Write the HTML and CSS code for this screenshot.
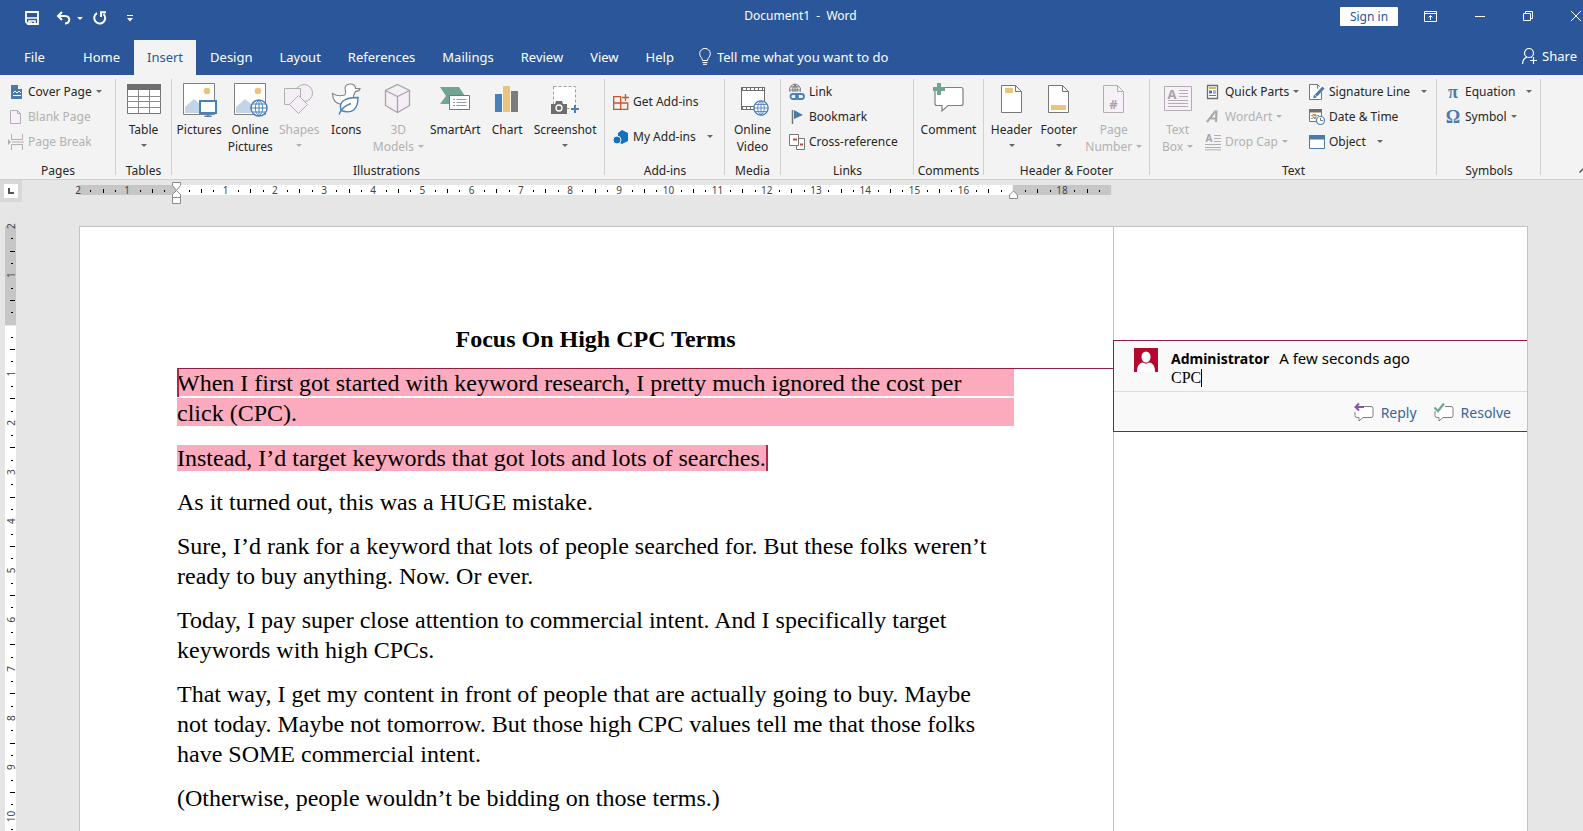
FILE: index.html
```html
<!DOCTYPE html>
<html lang="en">
<head>
    <meta charset="UTF-8">
    <meta name="viewport" content="width=device-width, initial-scale=1.0">
    <title>Document1 - Word</title>
    <link rel="stylesheet" href="styles.css">
</head>
<body>
    <svg class="defs" width="0" height="0" aria-hidden="true">
        <symbol id="globe" viewBox="0 0 18 18">
            <circle cx="9" cy="9" r="8" fill="#fff" stroke="#4a80b8" stroke-width="1.5"/>
            <path d="M1 9h16M9 1v16M2.5 5h13M2.5 13h13M9 1c-5 4-5 12 0 16M9 1c5 4 5 12 0 16" fill="none" stroke="#4a80b8"/>
        </symbol>
    </svg>

    <header class="titlebar">
        <div class="quick">
            <button aria-label="Save"><svg width="14" height="14" viewBox="0 0 14 14"><path d="M1 1h12v12H3L1 11z" fill="none" stroke="#fff" stroke-width="1.8"/><path d="M1 7h12M4 13v-3h6v3M6 11v2" fill="none" stroke="#fff" stroke-width="1.6"/></svg></button>
            <button class="undo" aria-label="Undo"><svg width="15" height="14" viewBox="0 0 15 14"><path d="M6 1L2 5l4 4M2 5h7c3 0 5 2 4 5-.5 1.500-2 2.500-4 2.500" fill="none" stroke="#fff" stroke-width="2"/></svg><i class="caret"></i></button>
            <button aria-label="Repeat"><svg width="14" height="14" viewBox="0 0 14 14"><path d="M4 2.200A5.500 5.500 0 1 0 10.500 3M8 6V1.200h5" fill="none" stroke="#fff" stroke-width="2"/></svg></button>
            <button class="more" aria-label="Customize Quick Access Toolbar"><svg width="6" height="7" viewBox="0 0 6 7"><path d="M0 .5h6" stroke="#fff"/><path d="M0 3h6L3 6.500z" fill="#fff"/></svg></button>
        </div>
        <div class="doc-name">Document1&nbsp; -&nbsp; Word</div>
        <div class="window-tools">
            <button class="sign-in">Sign in</button>
            <button aria-label="Ribbon Display Options"><svg width="13" height="11" viewBox="0 0 13 11"><path d="M.5.5h12v10H.5zM.5 2.500h12M6.500 9V4.500M4.500 6.500l2-2 2 2" fill="none" stroke="#fff"/></svg></button>
            <button aria-label="Minimize"><svg width="10" height="10" viewBox="0 0 10 10"><path d="M0 5.500h10" stroke="#fff"/></svg></button>
            <button aria-label="Restore Down"><svg width="10" height="10" viewBox="0 0 10 10"><path d="M.5 2.500h7v7h-7zM2.500 2.500v-2h7v7h-2" fill="none" stroke="#fff"/></svg></button>
            <button aria-label="Close"><svg width="10" height="10" viewBox="0 0 10 10"><path d="M0 0l10 10M10 0L0 10" stroke="#fff"/></svg></button>
        </div>
    </header>

    <nav class="tabs">
        <button class="tab file">File</button>
        <button class="tab">Home</button>
        <button class="tab active">Insert</button>
        <button class="tab">Design</button>
        <button class="tab">Layout</button>
        <button class="tab">References</button>
        <button class="tab">Mailings</button>
        <button class="tab">Review</button>
        <button class="tab">View</button>
        <button class="tab">Help</button>
        <label class="tell-me">
            <svg width="12" height="17" viewBox="0 0 12 17"><path d="M3.500 12.500C3.500 10 .7 9 .7 5.700a5.300 5.300 0 0 1 10.600 0c0 3.300-2.800 4.300-2.800 6.800zM3.500 14.500h5M4 16.300h4" fill="none" stroke="#fff"/></svg>
            <input type="text" placeholder="Tell me what you want to do" aria-label="Tell me what you want to do">
        </label>
        <button class="share"><svg width="15" height="16" viewBox="0 0 15 16"><circle cx="7" cy="5" r="4.500" fill="none" stroke="#fff" stroke-width="1.200"/><path d="M.6 16c0-4 2-6 4.400-7M9 9l1 .5M8 12.500h7M11.500 9v7" fill="none" stroke="#fff" stroke-width="1.200"/></svg>Share</button>
    </nav>

    <section class="ribbon">
        <div class="group pages">
            <div class="rows">
                <button class="small"><svg width="16" height="16" viewBox="0 0 16 16"><path d="M3 1h7l4 4v10H3z" fill="#4a7ba8"/><path d="M10 1l4 4h-4z" fill="#fff"/><path d="M5 9l2-2 2 2 2-2 2 2M5 11.500h8" fill="none" stroke="#fff"/></svg>Cover Page<i class="caret"></i></button>
                <button class="small" disabled><svg width="16" height="16" viewBox="0 0 16 16"><path d="M2.500 1.500h7l3 3v10h-10zM9.500 1.500v3h3" fill="#f6f0f7" stroke="#b4adb6"/></svg>Blank Page</button>
                <button class="small" disabled><svg width="16" height="16" viewBox="0 0 16 16"><path d="M3.500 0v5.500h11V0M3.500 16v-5.500h11V16M4 8h12" fill="none" stroke="#b4adb6"/><path d="M0 5l3 3-3 3z" fill="#b4adb6"/></svg>Page Break</button>
            </div>
            <h2>Pages</h2>
        </div>

        <div class="group tables">
            <div class="bigs">
                <button class="big"><svg width="36" height="34" viewBox="0 0 36 34"><path d="M1.500 2v28.500h33V2" fill="#fff" stroke="#777"/><path d="M1 1h34v6H1z" fill="#6e6e6e"/><path d="M12.500 7v23M23.500 7v23M1 13.500h34M1 18.500h34M1 24.500h34" stroke="#8a8a8a"/></svg><span>Table</span><i class="caret"></i></button>
            </div>
            <h2>Tables</h2>
        </div>

        <div class="group illustrations">
            <div class="bigs">
                <button class="big"><svg width="36" height="34" viewBox="0 0 36 34"><path d="M2.500.5h31v31h-31z" fill="#fff" stroke="#808080"/><path d="M4 30V24l9-8 6 5v9z" fill="#c3d4e6"/><circle cx="26" cy="8" r="3.300" fill="#e9c47e"/><path d="M19 18h16v12H19z" fill="#fff" stroke="#4a80b8" stroke-width="2"/><path d="M27 30v3M23.500 33.300h7" stroke="#4a80b8" stroke-width="1.500"/></svg><span>Pictures</span></button>
                <button class="big"><svg width="36" height="34" viewBox="0 0 36 34"><path d="M2.500.5h31v31h-31z" fill="#fff" stroke="#808080"/><path d="M4 30V24l9-8 6 5v9z" fill="#c3d4e6"/><circle cx="26" cy="8" r="3.300" fill="#e9c47e"/><use href="#globe" x="18" y="16" width="18" height="18"/></svg><span>Online<br>Pictures</span></button>
                <button class="big" disabled><svg width="36" height="34" viewBox="0 0 36 34"><g fill="#f4eff5" stroke="#b4adb6"><circle cx="23" cy="10" r="8.500"/><path d="M3.500 5.500h16v16h-16z"/><path d="M17.500 12.500l9 9-9 9-9-9z"/></g></svg><span>Shapes</span><i class="caret"></i></button>
                <button class="big"><svg width="36" height="34" viewBox="0 0 36 34"><path d="M17.500 8c-1.500-4 .5-7 4.500-7 3.500 0 5.500 2 5.500 4.500H32c-.5 2-2 2.800-4.500 2.800-.5 2-2 3-2 4.700 2 8-6 9-11 8.500C8 21 4.500 17 4.500 10.500c4 2.500 9 2.500 12 1.500 1-.8 1.500-2.500 1-4z" fill="#fff" stroke="#858585" stroke-width="1.200"/><path d="M13 27.500C10.500 19 16 14.500 30 14.500c0 12-6 17-17 13zM11 31.500c2-6 6-9 12-11" fill="#fff" stroke="#4a80b8" stroke-width="1.400"/></svg><span>Icons</span></button>
                <button class="big" disabled><svg width="36" height="34" viewBox="0 0 36 34"><path d="M17.500 1.500l12 6v15l-12 7-12-7v-15z" fill="#f4eff5" stroke="#a9a2ab" stroke-width="1.300"/><path d="M5.500 7.500l12 6 12-6M17.500 13.500v16" fill="none" stroke="#a9a2ab" stroke-width="1.300"/></svg><span>3D</span><span class="line">Models<i class="caret"></i></span></button>
                <button class="big"><svg width="36" height="34" viewBox="0 0 36 34"><path d="M3 4h19l6 9-6 8H3l6-8z" fill="#6fa592"/><path d="M12.500 12.500h20v14h-20z" fill="#fff" stroke="#777"/><path d="M16 16.500h2M16 19.500h2M16 22.500h2M19.500 16.500h10M19.500 19.500h10M19.500 22.500h10" stroke="#999"/></svg><span>SmartArt</span></button>
                <button class="big"><svg width="36" height="34" viewBox="0 0 36 34"><path d="M6 11h7v18H6z" fill="#4a80b8"/><path d="M14 3h7v26h-7z" fill="#e9c47e"/><path d="M22 8h7v21h-7z" fill="#7b7b7b"/></svg><span>Chart</span></button>
                <button class="big"><svg width="36" height="34" viewBox="0 0 36 34"><path d="M6.500 3.500h22v22h-22z" fill="#fff" stroke="#a0a0a0" stroke-dasharray="3 2"/><path d="M4 21h4l1-3h6l1 3h4v10H4z" fill="#6e6e6e"/><circle cx="12" cy="25" r="3" fill="none" stroke="#fff" stroke-width="1.300"/><path d="M24 26h8M28 22v8" stroke="#4a80b8" stroke-width="2"/></svg><span>Screenshot</span><i class="caret"></i></button>
            </div>
            <h2>Illustrations</h2>
        </div>

        <div class="group addins">
            <div class="rows">
                <button class="small"><svg width="16" height="16" viewBox="0 0 16 16"><path d="M.7 2.700h7v12.600h-7zM.7 9h14v6.300H7.700M12.500 0v7M9 3.500h7" fill="none" stroke="#c8532d" stroke-width="1.300"/></svg>Get Add-ins</button>
                <button class="small"><svg width="16" height="16" viewBox="0 0 16 16"><path d="M9 1l6 3v8l-6 3-4-2V4z" fill="#0f72c5"/><circle cx="4" cy="11" r="4" fill="#0f72c5" stroke="#f3f3f3"/></svg>My Add-ins<i class="caret far"></i></button>
            </div>
            <h2>Add-ins</h2>
        </div>

        <div class="group media">
            <div class="bigs">
                <button class="big"><svg width="36" height="34" viewBox="0 0 36 34"><path d="M6.500 4.500h23v22h-23z" fill="#fff" stroke="#6e6e6e"/><path d="M6 6h24M6 25h24" stroke="#6e6e6e" stroke-width="4"/><path d="M8 6h21M8 25h21" stroke="#fff" stroke-width="2" stroke-dasharray="3 1"/><use href="#globe" x="18" y="17" width="16" height="16"/></svg><span>Online<br>Video</span></button>
            </div>
            <h2>Media</h2>
        </div>

        <div class="group links">
            <div class="rows">
                <button class="small"><svg width="16" height="16" viewBox="0 0 16 16"><path d="M1 8a5.500 5.500 0 1 1 10 0M.5 6h11M2 2.800h8M6 .5V8M6 .5C3.500 3 3.500 6 4 8M6 .5C8.500 3 8.500 6 8 8" fill="none" stroke="#777"/><rect x="1.500" y="10" width="7.500" height="5" rx="2.500" fill="none" stroke="#4a80b8" stroke-width="1.800"/><rect x="7" y="10" width="8" height="5" rx="2.500" fill="none" stroke="#4a80b8" stroke-width="1.800"/></svg>Link</button>
                <button class="small"><svg width="16" height="16" viewBox="0 0 16 16"><path d="M3.500 1v14" stroke="#777" stroke-width="1.500"/><path d="M5 1l9 5-9 4z" fill="#4a7ba8"/></svg>Bookmark</button>
                <button class="small"><svg width="16" height="16" viewBox="0 0 16 16"><path d="M7.500 4.500h8v11h-8z" fill="#fff" stroke="#777"/><path d="M.5.500h9v11h-9z" fill="#fff" stroke="#777"/><path d="M4 5.500h4M11 10.500h3" stroke="#b94a3c" stroke-width="2"/></svg>Cross-reference</button>
            </div>
            <h2>Links</h2>
        </div>

        <div class="group comments">
            <div class="bigs">
                <button class="big"><svg width="36" height="34" viewBox="0 0 36 34"><path d="M6 4.500h24q2 0 2 2v14q0 2-2 2H17l-6 5.500v-5.500H6q-2 0-2-2v-14q0-2 2-2z" fill="#fff" stroke="#808080" stroke-width="1.200"/><path d="M2 6h12M8 0v12" stroke="#6fa592" stroke-width="4"/></svg><span>Comment</span></button>
            </div>
            <h2>Comments</h2>
        </div>

        <div class="group header-footer">
            <div class="bigs">
                <button class="big"><svg width="36" height="34" viewBox="0 0 36 34"><path d="M7.500 2.500h14l6 6v21h-20zM21.500 2.500v6h6" fill="#fff" stroke="#777"/><path d="M11 5h8v5h-8z" fill="#e9c47e"/></svg><span>Header</span><i class="caret"></i></button>
                <button class="big"><svg width="36" height="34" viewBox="0 0 36 34"><path d="M7.500 2.500h14l6 6v21h-20zM21.500 2.500v6h6" fill="#fff" stroke="#777"/><path d="M10 22h15v5H10z" fill="#e9c47e"/></svg><span>Footer</span><i class="caret"></i></button>
                <button class="big" disabled><svg width="36" height="34" viewBox="0 0 36 34"><path d="M7.500 2.500h14l6 6v21h-20zM21.500 2.500v6h6" fill="#f6f0f7" stroke="#b4adb6"/><text x="17.500" y="26" class="icon-hash">#</text></svg><span>Page</span><span class="line">Number<i class="caret"></i></span></button>
            </div>
            <h2>Header &amp; Footer</h2>
        </div>

        <div class="group text">
            <div class="bigs">
                <button class="big" disabled><svg width="36" height="34" viewBox="0 0 36 34"><path d="M4.500 3.500h27v24h-27z" fill="#f6f0f7" stroke="#b4adb6"/><text x="12" y="16" class="icon-letter">A</text><path d="M19 7.500h9M19 10.500h9M19 13.500h9M8 17.500h20M8 20.500h20M8 23.500h20" stroke="#b4adb6"/></svg><span>Text</span><span class="line">Box<i class="caret"></i></span></button>
            </div>
            <div class="rows">
                <button class="small"><svg width="16" height="16" viewBox="0 0 16 16"><path d="M2.500 1.500h10v13h-10z" fill="#fff" stroke="#6e6e6e" stroke-width="1.300"/><path d="M4 4h7" stroke="#e0b261" stroke-width="2"/><path d="M4 6.500h3v3H4z" fill="#4a7ba8"/><path d="M8 7h3M8 9h3M4 11.500h7" stroke="#4a7ba8" stroke-width="1.200"/></svg>Quick Parts<i class="caret"></i></button>
                <button class="small" disabled><svg width="16" height="16" viewBox="0 0 16 16"><path d="M2 13L10 2.500h1.500l-.5 10.500M6 9.500h6" fill="none" stroke="#aaa" stroke-width="2.200"/></svg>WordArt<i class="caret"></i></button>
                <button class="small" disabled><svg width="16" height="16" viewBox="0 0 16 16"><text x="4" y="8" class="icon-letter small-letter">A</text><path d="M9 1.500h7M9 4.500h7M9 7.500h7M0 10.500h16M0 13.500h16M0 15.800h16" stroke="#b4adb6"/></svg>Drop Cap<i class="caret"></i></button>
            </div>
            <div class="rows">
                <button class="small"><svg width="16" height="16" viewBox="0 0 16 16"><path d="M.5.500h8l4 4v11H.5zM8.500.5v4h4" fill="#fff" stroke="#777"/><path d="M5 14l2-4 8-8" fill="none" stroke="#fff" stroke-width="5"/><path d="M14.500 3.500L7 11.500" stroke="#4a7ba8" stroke-width="3"/><path d="M4 14.500l1.200-4 2.800 2.800z" fill="#4a7ba8"/></svg>Signature Line<i class="caret far"></i></button>
                <button class="small"><svg width="16" height="16" viewBox="0 0 16 16"><path d="M.5.500h12v12H.5z" fill="#fff" stroke="#777"/><path d="M0 0h13v3.500H0z" fill="#6e6e6e"/><path d="M2 6.500h9M2 9.500h5" stroke="#999" stroke-dasharray="2 1"/><path d="M4 5.500h3v3H4z" fill="none" stroke="#d08a3c"/><circle cx="11.500" cy="11.500" r="4" fill="#fff" stroke="#4a80b8" stroke-width="1.200"/><path d="M11.500 9v2.500H14" fill="none" stroke="#777"/></svg>Date &amp; Time</button>
                <button class="small"><svg width="16" height="16" viewBox="0 0 16 16"><path d="M.5 2.500h15v12H.5z" fill="#fff" stroke="#4a7ba8"/><path d="M0 1h16v4.500H0z" fill="#4a7ba8"/></svg>Object<i class="caret far"></i></button>
            </div>
            <h2>Text</h2>
        </div>

        <div class="group symbols">
            <div class="rows">
                <button class="small"><b class="glyph">π</b>Equation<i class="caret far"></i></button>
                <button class="small"><b class="glyph">Ω</b>Symbol<i class="caret"></i></button>
            </div>
            <h2>Symbols</h2>
        </div>
        <button class="collapse" aria-label="Collapse the Ribbon"><svg width="8" height="5" viewBox="0 0 8 5"><path d="M.5 4.500L4 1l3.500 3.500" fill="none" stroke="#555" stroke-width="1.500"/></svg></button>
    </section>

    <div class="ruler-bar">
        <button class="tab-stop" aria-label="Left Tab"><svg width="6" height="6" viewBox="0 0 6 6"><path d="M1 0v5h5" fill="none" stroke="#555" stroke-width="2"/></svg></button>
        <svg id="ruler" class="ruler" width="1060" height="24" viewBox="-20 0 1060 24"></svg>
    </div>

    <main class="workspace">
        <svg id="side-ruler" class="side-ruler" width="11" height="1400" viewBox="0 0 11 1400"></svg>
        <div class="page">
            <article class="sheet">
                <h1>Focus On High CPC Terms</h1>
                <p class="marked">When I first got started with keyword research, I pretty much ignored the cost per click (CPC).</p>
                <p><mark>Instead, I’d target keywords that got lots and lots of searches.</mark></p>
                <p>As it turned out, this was a HUGE mistake.</p>
                <p>Sure, I’d rank for a keyword that lots of people searched for. But these folks weren’t ready to buy anything. Now. Or ever.</p>
                <p>Today, I pay super close attention to commercial intent. And I specifically target keywords with high CPCs.</p>
                <p>That way, I get my content in front of people that are actually going to buy. Maybe<br>not today. Maybe not tomorrow. But those high CPC values tell me that those folks<br>have SOME commercial intent.</p>
                <p>(Otherwise, people wouldn’t be bidding on those terms.)</p>
            </article>
            <aside class="markup">
                <div class="comment">
                    <div class="comment-head">
                        <svg width="24" height="24" viewBox="0 0 24 24"><path d="M0 0h24v24H0z" fill="#b5082e"/><ellipse cx="12" cy="9" rx="4.500" ry="5.500" fill="#fff"/><path d="M3 24c0-6 2-9 6-9.500 2 1.500 4 1.500 6 0 4 .5 6 3.500 6 9.500z" fill="#fff"/></svg>
                        <div>
                            <div class="byline"><strong>Administrator</strong><time>A few seconds ago</time></div>
                            <div class="note">CPC</div>
                        </div>
                    </div>
                    <div class="comment-foot">
                        <button><svg width="20" height="19" viewBox="0 0 20 19"><path d="M8 3.500h9q2 0 2 2v7q0 2-2 2H9l-4 3.500v-3.500H3q-2 0-2-2V9" fill="#fff" stroke="#808080"/><path d="M10 4H1.500M5 .5L1.500 4 5 7.500" fill="none" stroke="#8656a5" stroke-width="2"/></svg>Reply</button>
                        <button><svg width="20" height="19" viewBox="0 0 20 19"><path d="M11 3.500h6q2 0 2 2v7q0 2-2 2H9l-4 3.500v-3.500H3q-2 0-2-2V8" fill="#fff" stroke="#808080"/><path d="M.5 4.500L4 8l6-7.500" fill="none" stroke="#6fa592" stroke-width="2.200"/></svg>Resolve</button>
                    </div>
                </div>
            </aside>
        </div>
    </main>

    <script>
        const CM = 49.2;
        const NS = 'http://www.w3.org/2000/svg';

        function add(parent, tag, attrs, text) {
            const node = document.createElementNS(NS, tag);
            for (const key in attrs) node.setAttribute(key, attrs[key]);
            if (text !== undefined) node.textContent = text;
            parent.appendChild(node);
        }

        // top ruler: 2 cm margin, 17 cm of text, then the right margin
        function drawRuler() {
            const svg = document.getElementById('ruler');
            add(svg, 'rect', { x: 0, y: 5, width: 21 * CM, height: 10, fill: '#c6c6c6' });
            add(svg, 'rect', { x: 2 * CM, y: 5, width: 17 * CM, height: 10, fill: '#fff' });
            for (let i = 0; i < 21; i++) {
                const x = i * CM;
                const n = Math.abs(i - 2);
                if (n !== 0 && n !== 17) add(svg, 'text', { x: x, y: 14 }, n);
                add(svg, 'rect', { x: Math.round(x + CM / 4), y: 10, width: 1, height: 2 });
                add(svg, 'rect', { x: Math.round(x + CM / 2), y: 9, width: 1, height: 4 });
                add(svg, 'rect', { x: Math.round(x + CM * 3 / 4), y: 10, width: 1, height: 2 });
            }
            add(svg, 'path', { d: 'M94.500 2.500h8v3l-4 5-4-5zM98.500 10.500l4 4v9h-8v-9zM94.500 17.500h8', class: 'handle' });
            add(svg, 'path', { d: 'M931.500 18.500v-3.500l4-4 4 4v3.500z', class: 'handle' });
        }

        // side ruler runs down as far as the window shows
        function drawSideRuler() {
            const svg = document.getElementById('side-ruler');
            const count = Math.ceil(svg.parentNode.clientHeight / CM);
            add(svg, 'rect', { x: 0, y: 0, width: 11, height: 1400, fill: '#fff' });
            add(svg, 'rect', { x: 0, y: 0, width: 11, height: 2 * CM + 1, fill: '#c6c6c6' });
            for (let i = 0; i < count; i++) {
                const y = i * CM;
                const n = Math.abs(i - 2);
                if (n !== 0) add(svg, 'text', { x: 10, y: y, transform: `rotate(-90 10 ${y})` }, n);
                add(svg, 'rect', { x: 6, y: Math.round(y + CM / 4), width: 2, height: 1 });
                add(svg, 'rect', { x: 5, y: Math.round(y + CM / 2), width: 5, height: 1 });
                add(svg, 'rect', { x: 6, y: Math.round(y + CM * 3 / 4), width: 2, height: 1 });
            }
        }

        drawRuler();
        drawSideRuler();
    </script>
</body>
</html>
```

FILE: styles.css
```css
* {
    box-sizing: border-box;
}

body {
    margin: 0;
    height: 100vh;
    display: flex;
    flex-direction: column;
    overflow: hidden;
    background: #e6e6e6;
    color: #262626;
    font-family: "Noto Sans", "Open Sans", sans-serif;
    font-size: 12px;
}

button {
    display: flex;
    align-items: center;
    padding: 0;
    border: 0;
    background: none;
    color: inherit;
    font: inherit;
    white-space: nowrap;
}

button:disabled {
    color: #b1b1b1;
}

svg {
    flex: none;
    overflow: visible;
}

.defs {
    position: absolute;
}

.caret {
    flex: none;
    margin-left: 4px;
    border: 3px solid transparent;
    border-top-color: #666;
    border-bottom: 0;
}

button:disabled .caret {
    border-top-color: #b1b1b1;
}

/* title bar */
.titlebar {
    flex: none;
    display: grid;
    grid-template-columns: 1fr auto 1fr;
    height: 40px;
    background: #2b579a;
    color: #fff;
}

.quick {
    display: flex;
    align-items: center;
    gap: 10px;
    padding: 0 0 4px 25px;
}

.quick .undo {
    margin-left: 7px;
}

.quick .caret {
    margin-left: 6px;
    border-top-color: #fff;
}

.quick .more {
    margin-left: 10px;
}

.doc-name {
    line-height: 32px;
    padding-left: 18px;
}

.window-tools {
    display: flex;
    justify-content: flex-end;
    align-items: center;
    gap: 38px;
    height: 32px;
    padding-right: 2px;
}

.window-tools .sign-in {
    justify-content: center;
    width: 58px;
    height: 19px;
    margin-right: -12px;
    background: #fff;
    border-radius: 1px;
    color: #2b579a;
}

/* ribbon tabs */
.tabs {
    flex: none;
    display: flex;
    height: 35px;
    background: #2b579a;
    color: #fff;
    font-size: 13px;
}

.tab {
    padding: 0 13px 2px;
    margin-right: 1px;
}

.tab.file {
    justify-content: center;
    width: 69px;
}

.tab.active {
    background: #f3f3f3;
    color: #2b579a;
}

.tell-me {
    display: flex;
    align-items: center;
    gap: 6px;
    margin-left: 11px;
    padding-bottom: 2px;
}

.tell-me input {
    width: 200px;
    padding: 0;
    border: 0;
    background: none;
    color: #fff;
    font: inherit;
    outline: 0;
}

.tell-me input::placeholder {
    color: #fff;
    opacity: 1;
}

.share {
    gap: 5px;
    margin-left: auto;
    padding: 0 6px 4px 0;
}

/* ribbon */
.ribbon {
    flex: none;
    display: flex;
    height: 105px;
    background: #f3f3f3;
    border-bottom: 1px solid #d2d0ce;
}

.group {
    flex: none;
    display: grid;
    grid-template-rows: 88px 16px;
    grid-auto-flow: column;
    justify-content: center;
    background: linear-gradient(#d0d0d0, #d0d0d0) right 4px / 1px 96px no-repeat;
}

.group h2 {
    grid-row: 2;
    grid-column: 1 / -1;
    margin: 0;
    font-size: 12px;
    font-weight: normal;
    line-height: 16px;
    text-align: center;
}

.bigs {
    display: flex;
    padding-top: 8px;
}

.big {
    flex-direction: column;
    min-width: 47px;
    padding: 0 3px;
    line-height: 17px;
}

.big svg {
    margin-bottom: 4px;
}

.big > .caret {
    margin: 6px 0 0;
}

.big .line {
    display: flex;
    align-items: center;
}

.rows {
    display: flex;
    flex-direction: column;
    padding-top: 4px;
}

.small {
    gap: 4px;
    height: 25px;
}

.small .caret {
    margin-left: 0;
}

.small .caret.far {
    margin-left: 7px;
}

.pages {
    width: 116px;
    justify-content: stretch;
}

.pages .rows,
.links .rows,
.addins .rows,
.symbols .rows {
    padding-left: 8px;
}

.tables,
.media {
    width: 56px;
    padding-right: 1px;
}

.illustrations {
    width: 433px;
    padding-right: 4px;
}

.addins {
    width: 120px;
    justify-content: stretch;
}

.addins .rows {
    gap: 10px;
    padding-top: 14px;
}

.links {
    width: 133px;
    justify-content: stretch;
}

.comments {
    width: 70px;
    padding-right: 1px;
}

.header-footer {
    width: 166px;
    padding-right: 1px;
}

.text {
    width: 287px;
    grid-template-columns: 55px 104px 128px;
}

.text .bigs {
    justify-content: center;
}

.symbols {
    width: 104px;
    justify-content: stretch;
}

.glyph {
    width: 16px;
    color: #4a7ba8;
    font-family: "Liberation Serif", serif;
    font-size: 18px;
    line-height: 16px;
    text-align: center;
}

.icon-hash,
.icon-letter {
    fill: #aaa3ac;
    font-size: 13px;
    font-weight: bold;
    text-anchor: middle;
}

.icon-letter.small-letter {
    font-size: 10px;
}

.collapse {
    align-items: flex-end;
    margin-left: auto;
    margin-right: -4px;
    padding-bottom: 6px;
}

/* rulers */
.ruler-bar {
    flex: none;
    display: flex;
    align-items: flex-start;
    height: 36px;
}

.tab-stop {
    justify-content: center;
    width: 22px;
    height: 22px;
    border: 4px solid #d8d8d8;
    background: #fff;
}

.ruler {
    margin-left: 36px;
}

.ruler text,
.side-ruler text {
    fill: #444;
    font-size: 10px;
    text-anchor: middle;
}

.ruler .handle {
    fill: #fff;
    stroke: #8a8a8a;
}

/* document */
.workspace {
    flex: 1;
    display: flex;
    align-items: flex-start;
    min-height: 0;
    padding: 10px 55px 0 5px;
    overflow: hidden;
}

.page {
    flex: 1;
    display: flex;
    min-height: 1400px;
    margin-left: 63px;
    background: #fff;
    border: 1px solid #c3c3c3;
}

.sheet {
    flex: 1;
    padding: 97px 99px 97px 97px;
    color: #000;
    font-family: "Liberation Serif", "Times New Roman", serif;
    font-size: 24px;
    line-height: 30px;
}

.sheet h1 {
    margin: 0 0 14px;
    font-size: 24px;
    text-align: center;
}

.sheet p {
    margin: 0 0 14px;
}

.sheet .marked {
    position: relative;
    margin-bottom: 15px;
    background: repeating-linear-gradient(#fbabbd 0 28px, #fff 28px 30px);
}

/* line from the marked text to its comment */
.marked::before {
    content: "";
    position: absolute;
    top: 0;
    left: 0;
    right: -100px;
    height: 28px;
    border-top: 1px solid #8a1f42;
    border-left: 2px solid #b5234f;
}

.sheet mark {
    background: #fbabbd;
    color: inherit;
    border-right: 2px solid #b5234f;
}

.markup {
    flex: none;
    width: 414px;
    border-left: 1px solid #c3c3c3;
}

.comment {
    margin: 113px 0 0 -1px;
    background: #f9f9f9;
    border: 1px solid #8a1f42;
    border-right: 0;
    color: #000;
}

.comment-head {
    display: flex;
    gap: 13px;
    height: 51px;
    padding: 7px 20px 0;
    border-bottom: 1px solid #dcdcdc;
}

.byline {
    display: flex;
    align-items: baseline;
    gap: 10px;
    font-size: 14px;
    line-height: 20px;
}

.byline time {
    font-size: 15px;
}

.note {
    width: max-content;
    border-right: 1px solid #000;
    font-family: "Liberation Serif", serif;
    font-size: 16px;
    line-height: 18px;
}

.comment-foot {
    display: flex;
    justify-content: flex-end;
    gap: 17px;
    height: 39px;
    padding: 2px 16px 0 0;
    color: #3a6598;
    font-size: 14px;
}

.comment-foot button {
    gap: 7px;
}
```
